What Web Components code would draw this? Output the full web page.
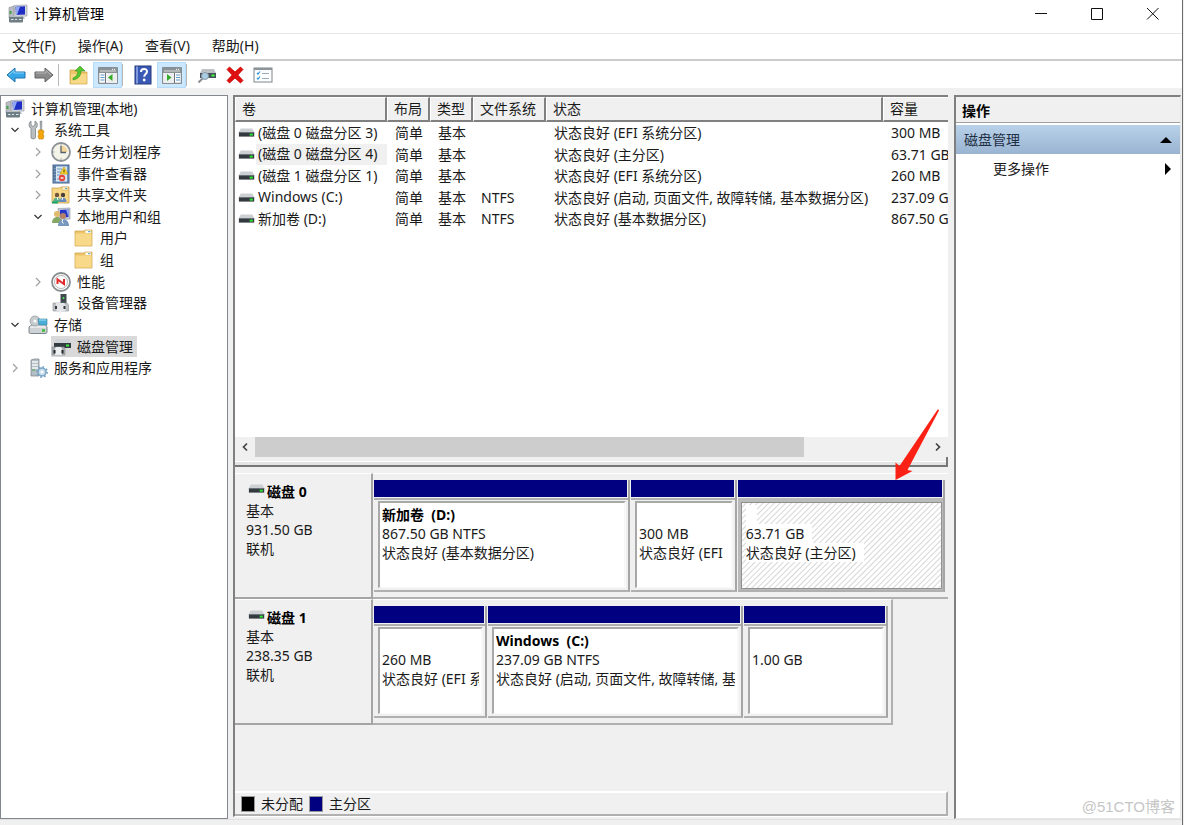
<!DOCTYPE html>
<html lang="zh-CN">
<head>
<meta charset="utf-8">
<title>计算机管理</title>
<style>
html, body { margin: 0; min-height: 100%; background: #f0f0f0; }
body { font: 14px/20px "Noto Sans", "Noto Sans CJK SC", sans-serif; color: #1a1a1a; }
</style>
</head>
<body>
<mmc-window></mmc-window>
<script>
const ICONS = {
  computer: `<path d="M1 3.500L6 2v12H1z" fill="#b9bdc2" stroke="#8d9299" stroke-width=".6"/><path d="M6 1.500L19 1v11L7 12.500z" fill="#d5d8dd" stroke="#9a9fa8" stroke-width=".7"/><path d="M7.500 2.800L17 2.300v8.200L8 11z" fill="#1f2fc4"/><path d="M8 2.800h4L9 11H8z" fill="#8ea6f4"/><path d="M12 13h4l1 2h-6z" fill="#b9bcc2"/><rect x="1" y="12" width="14" height="6.500" rx="1" fill="#6f7d84"/><path d="M1.500 12.500h13" stroke="#b4bec3"/><path d="M3 15.500h2.500M7 15.500h2M11 15.500h2.500" stroke="#dfe6e8" stroke-width="1.200"/><path d="M2.500 7v3" stroke="#41a14a" stroke-width="2"/>`,
  back: `<path d="M1 10l8-7v4h10v6H9v4z" fill="#35a7e8" stroke="#2173aa" stroke-linejoin="round"/><path d="M3 10l5-4.500V8h10" fill="none" stroke="#8dd4fa"/>`,
  forward: `<path d="M19 10l-8-7v4H1v6h10v4z" fill="#8b8b8b" stroke="#626262" stroke-linejoin="round"/><path d="M2 8h10V5.500l5 4.500" fill="none" stroke="#b9b9b9"/>`,
  upfolder: `<path d="M1 5h6l1 2h10v12H1z" fill="#eec568" stroke="#caa048" stroke-width=".7"/><path d="M2 9h15.500v9.500H2z" fill="#f8d98a"/><path d="M4 13c3-1 5-4 5-7H6l5-5 5 5h-4c0 5-3 8-8 9z" fill="#55c62e" stroke="#329019" stroke-width=".6"/>`,
  paneleft: `<rect x=".7" y="2.700" width="18.600" height="15.600" fill="#fafafa" stroke="#71777b"/><path d="M1 3h18v5H1z" fill="#8b9296"/><path d="M2 6h16" stroke="#d9dcde"/><path d="M14 4.300h1M16 4.300h1" stroke="#fff"/><path d="M7.500 8v10" stroke="#6b7074"/><path d="M2.500 10h4M2.500 12.500h4M2.500 15h4" stroke="#5c9ac8" stroke-width="1.200"/><path d="M9 8h10v10H9z" fill="#eceeef"/><path d="M14.500 9v7L10 12.500z" fill="#34a927"/>`,
  help: `<rect x="2" y="1" width="16" height="18" fill="#3a58b5" stroke="#24387f"/><path d="M3 1.500h2v17H3z" fill="#7f98dc"/><path d="M8 7c0-4 6-4 6-.5 0 2.500-2.800 2.500-2.800 5.200" fill="none" stroke="#fff" stroke-width="2"/><circle cx="11.200" cy="15" r="1.400" fill="#fff"/>`,
  paneright: `<rect x=".7" y="2.700" width="18.600" height="15.600" fill="#fafafa" stroke="#71777b"/><path d="M1 3h18v5H1z" fill="#8b9296"/><path d="M2 6h16" stroke="#d9dcde"/><path d="M14 4.300h1M16 4.300h1" stroke="#fff"/><path d="M1.500 8h10.500v10H1.500z" fill="#eceeef"/><path d="M12.500 8v10" stroke="#6b7074"/><path d="M14 10h4M14 12.500h4M14 15h4" stroke="#5c9ac8" stroke-width="1.200"/><path d="M5 9v7l4.500-3.500z" fill="#34a927"/>`,
  diskfind: `<path d="M5 4h12l2 4v1H3V8z" fill="#bcc1c5"/><path d="M3 8h16v5H3z" fill="#46525a"/><path d="M14.500 10.500h3" stroke="#3dff3d" stroke-width="2"/><circle cx="8" cy="11" r="3.500" fill="#a9cee6" stroke="#8d9ba5"/><path d="M5.500 13.500L1.500 17.500" stroke="#858c93" stroke-width="2"/>`,
  remove: `<path d="M2 4.500L4.500 2 10 7l5.500-5L18 4.500 12.800 10l5.200 5.500-2.500 2.500L10 13l-5.500 5L2 15.500 7.200 10z" fill="#df1010" stroke="#c00" stroke-width=".8"/>`,
  checklist: `<rect x="1" y="3" width="18" height="14" fill="#fbfdff" stroke="#7e868b"/><path d="M1 4h18" stroke="#8a9499" stroke-width="2"/><path d="M4 8l1 1 2-2.500M4 13l1 1 2-2.500" fill="none" stroke="#358fd3" stroke-width="1.200"/><path d="M9 8.500h7M9 13.500h7" stroke="#9cadb7"/>`,
  tools: `<path d="M3 1v4l2 1.500L7 5V1c3 1.500 3 6 .5 7.500V18q-2.500 2-4.500 0V8.500C.5 7 .5 2.500 3 1z" fill="#b9bec0" stroke="#7e8486" stroke-width=".8"/><path d="M12 1h2l-.3 9h-1.400z" fill="#9ba2a6" stroke="#7e8486" stroke-width=".4"/><path d="M11 10h4l1 2-1 2 1 2-1 3h-4l-1-3 1-2-1-2z" fill="#f4a80d" stroke="#c1790a" stroke-width=".6"/>`,
  clock: `<circle cx="10" cy="10" r="9" fill="#f4f3e8" stroke="#8c9197" stroke-width="1.800"/><path d="M10 10V3.500a6.500 6.500 0 0 1 6.500 6.500z" fill="#f4d69a"/><path d="M10 4v6.500h5" fill="none" stroke="#56616b" stroke-width="1.300"/><path d="M10 2.500v1M10 16.500v1M2.500 10h1" stroke="#777"/>`,
  events: `<rect x="2" y="1" width="16" height="18" fill="#7296c0" stroke="#45658f"/><path d="M5 2.500h11v15H5z" fill="#d7e6f3"/><path d="M6 5h5M6 8h4M6 11h3M6 15h2" stroke="#6c94bd"/><path d="M2 3h3M2 6h3M2 9h3M2 12h3M2 15h3" stroke="#465e7c"/><path d="M13 3l4 7H9z" fill="#ffd530" stroke="#b99300" stroke-width=".6"/><path d="M13 5.500v3" stroke="#473a00"/><circle cx="11" cy="14" r="3.200" fill="#e5443a"/><path d="M9.500 14h3" stroke="#fff" stroke-width="1.300"/>`,
  shared: `<path d="M1 3h8l1-1h8v16H1z" fill="#f7d684" stroke="#cba14c" stroke-width=".8"/><path d="M11 2h6v3h-6z" fill="#fff3c8" stroke="#bc9d60" stroke-width=".5"/><path d="M14 3.500h2" stroke="#4f9ac7"/><circle cx="6" cy="10" r="2.200" fill="#70553f"/><path d="M2 17c0-6 8-6 8 0z" fill="#58ae8c"/><circle cx="12" cy="10" r="2.200" fill="#4b4039"/><path d="M8.500 17c0-6 7-6 7 0z" fill="#6889bd"/><path d="M6 12l1 3M12 12l-1 3" stroke="#fff"/><path d="M1 17.500h6" stroke="#1ba86b" stroke-width="2"/>`,
  users: `<path d="M7 1.500l12-.5v11l-11 .5z" fill="#c4cad8" stroke="#8a91a0" stroke-width=".6"/><path d="M9 3l8.500-.5V10L9 10.500z" fill="#2537c6"/><path d="M15 2.500h2.500V10z" fill="#91a7f4"/><circle cx="6" cy="7" r="3" fill="#e2b96d"/><path d="M1 16c0-8 10-8 10 0z" fill="#85a964"/><circle cx="12" cy="9" r="3" fill="#b58267"/><path d="M7 19c0-9 11-9 11 0z" fill="#7898bd"/><path d="M12 12l-1 3 1.500 1.500" stroke="#fff" fill="none"/>`,
  folder: `<path d="M1 3h9l1-1h7v16H1z" fill="#edc469" stroke="#cba14c" stroke-width=".7"/><path d="M1.500 5.500h16v12h-16z" fill="#f8d98a"/><path d="M11.500 2.500h5.500v2.500h-5.500z" fill="#fff"/><path d="M14 3.700h2.500" stroke="#4f9ac7"/>`,
  performance: `<circle cx="10" cy="10" r="9" fill="#fff" stroke="#888d90" stroke-width="1.800"/><circle cx="10" cy="10" r="6.500" fill="none" stroke="#b5b5b5"/><path d="M6.500 12V7.500L13 12V7" fill="none" stroke="#e32a2a" stroke-width="2"/>`,
  device: `<path d="M9.500 1h6v10h-6z" fill="#3f494f"/><path d="M12.500 4v2" stroke="#51e451" stroke-width="1.500"/><path d="M2 10h7v8H2zM10 10h6l1.500 2v6H10z" fill="#bfc3c7" stroke="#8a9196" stroke-width=".6"/><path d="M5 10h8l1.500 2v6h-9z" fill="#e3e5e7"/><path d="M4 13h2v3H4zM12.500 13h2v3h-2z" fill="#333b40"/>`,
  storage: `<path d="M1 12l4-3h12l2 3v5q0 1.500-2 1.500H2.500Q1 18.500 1 17z" fill="#ced2d5" stroke="#707a82" stroke-width=".9"/><path d="M2 12h16" stroke="#fff"/><path d="M14 15.500h3" stroke="#35bd35" stroke-width="2.500"/><circle cx="7" cy="6" r="5" fill="#c6cbcd" stroke="#8f979a" stroke-width=".7"/><circle cx="7" cy="6" r="1.500" fill="#fff"/><path d="M10 4h9v6h-8z" fill="#49afd8" stroke="#397c9b" stroke-width=".6"/><path d="M11 5h7" stroke="#a9e2f5"/>`,
  diskmgmt: `<path d="M5 2h13l2 4v1H3V6z" fill="#cfd3d6"/><path d="M3 6h17v5H3z" fill="#333c41"/><path d="M15 8.500h3" stroke="#3fea43" stroke-width="2"/><path d="M1 10h12l1 2v6H1z" fill="#a8adb2" stroke="#858a8f" stroke-width=".6"/><path d="M5 10h5l1 2v6H4v-6z" fill="#edeff0"/><path d="M2.500 13h2v3.500h-2zM10.500 13h2v3.500h-2z" fill="#222"/>`,
  services: `<path d="M3 2l3-1h5v17H3z" fill="#b5bec4" stroke="#77838b" stroke-width=".7"/><path d="M4 4h6M4 7h6M4 10h6" stroke="#f4f7f8" stroke-width="1.500"/><path d="M4 12h3" stroke="#41a54a"/><circle cx="14" cy="14" r="4" fill="#c4dbea" stroke="#7ba5c4" stroke-width="1.500"/><circle cx="14" cy="14" r="5" fill="none" stroke="#7ba5c4" stroke-width="2" stroke-dasharray="1.600 2.300"/><circle cx="14" cy="14" r="1.500" fill="#fff"/>`,
  drive: `<path d="M3 5h13l2 4H1z" fill="#cdd0d3"/><path d="M1 9h17v5H1z" fill="#333a3f"/><path d="M1 9.500h17" stroke="#70787e"/><path d="M13 11.800h3.500" stroke="#28e830" stroke-width="2.200"/>`
};

class Base extends HTMLElement {
  render(css, html) {
    const t = document.createElement("template");
    t.innerHTML = `<style>*{box-sizing:border-box}button{font:inherit;color:inherit;border:0;background:none;padding:0;margin:0}:host{box-sizing:border-box}${css}</style>${html}`;
    (this.shadowRoot || this.attachShadow({ mode: "open" })).replaceChildren(t.content.cloneNode(true));
  }
}
const define = (name, css, html) => customElements.define(name, class extends Base {
  connectedCallback() { this.render(css, typeof html === "function" ? html(this) : html); }
});

define("mmc-icon", `:host{display:block;flex:none;width:20px;height:20px}svg{display:block;width:100%;height:100%}`,
  el => `<svg viewBox="0 0 20 20" aria-hidden="true">${ICONS[el.getAttribute("name")]}</svg>`);

define("title-bar", `
  :host{display:flex;align-items:center;height:33px;padding:0 2px 6px 8px;background:#fff;gap:6px;color:#000}
  span{flex:1}
  div{display:flex}
  button{width:56px;height:27px;display:grid;place-items:center}
  svg{width:13px;height:13px;fill:none;stroke:#111}`,
  `<mmc-icon name="computer"></mmc-icon><span><slot></slot></span>
  <div><button aria-label="最小化"><svg><path d="M1 6.500h12"/></svg></button>
  <button aria-label="最大化"><svg><path d="M1.500 1.500h11v11h-11z"/></svg></button>
  <button aria-label="关闭"><svg><path d="M1 1l11.500 11.500M12.500 1L1 12.500"/></svg></button></div>`);

define("menu-bar", `
  :host{display:flex;align-items:flex-start;gap:22px;height:28px;padding:2px 12px 0;border-top:1px solid #e8e8e8;border-bottom:2px solid #cbcbcb;background:#fff}`,
  `<button>文件(F)</button><button>操作(A)</button><button>查看(V)</button><button>帮助(H)</button>`);

define("tool-bar", `
  :host{display:flex;align-items:center;height:27px;padding:0 2px;background:#fff}
  button{width:28px;height:26px;display:grid;place-items:center}
  button[aria-pressed]{background:#cce8ff;border:1px solid #b5dcfb;width:29px}
  i{width:1px;height:22px;background:#b8b8b8;margin-right:6px}`,
  `<button aria-label="后退"><mmc-icon name="back"></mmc-icon></button>
  <button aria-label="前进"><mmc-icon name="forward"></mmc-icon></button>
  <i></i>
  <button aria-label="上移一级"><mmc-icon name="upfolder"></mmc-icon></button>
  <button aria-label="显示控制台树" aria-pressed="true"><mmc-icon name="paneleft"></mmc-icon></button>
  <i></i>
  <button aria-label="帮助"><mmc-icon name="help"></mmc-icon></button>
  <button aria-label="显示操作窗格" aria-pressed="true"><mmc-icon name="paneright"></mmc-icon></button>
  <i></i>
  <button aria-label="重新扫描"><mmc-icon name="diskfind"></mmc-icon></button>
  <button aria-label="删除"><mmc-icon name="remove"></mmc-icon></button>
  <button aria-label="属性"><mmc-icon name="checklist"></mmc-icon></button>`);

define("tree-item", `
  :host{display:flex;align-items:center;gap:6px;padding-left:calc(var(--depth)*23px - 16px);white-space:nowrap}
  :host([level="0"]){--depth:0;padding-left:4px}:host([level="1"]){--depth:1}:host([level="2"]){--depth:2}:host([level="3"]){--depth:3}
  :host([level="0"]) .chev{display:none}
  .chev{width:14px;height:14px;flex:none;display:grid;place-items:center}
  svg{width:10px;height:10px;fill:none;stroke:#a0a0a0;stroke-width:1.200}
  .open svg{stroke:#333}
  .label{display:flex;align-items:center;gap:6px;height:100%;padding-right:4px}
  :host([selected]) .label{background:#d9d9d9}`,
  el => {
    const s = el.getAttribute("state");
    const chev = s ? `<button class="chev ${s}" aria-label="展开或折叠"><svg><path d="${s === "open" ? "M1.500 3L5 6.500 8.500 3" : "M3 1l4 4-4 4"}"/></svg></button>` : `<span class="chev"></span>`;
    return `${chev}<span class="label"><mmc-icon name="${el.getAttribute("icon")}"></mmc-icon><slot></slot></span>`;
  });

define("console-tree", `
  :host{display:block;background:#fff;border:1px solid #828790;padding-top:2px}
  div{display:grid;grid-auto-rows:1fr;height:281px}`,
  `<div role="tree">
  <tree-item level="0" icon="computer">计算机管理(本地)</tree-item>
  <tree-item level="1" state="open" icon="tools">系统工具</tree-item>
  <tree-item level="2" state="shut" icon="clock">任务计划程序</tree-item>
  <tree-item level="2" state="shut" icon="events">事件查看器</tree-item>
  <tree-item level="2" state="shut" icon="shared">共享文件夹</tree-item>
  <tree-item level="2" state="open" icon="users">本地用户和组</tree-item>
  <tree-item level="3" icon="folder">用户</tree-item>
  <tree-item level="3" icon="folder">组</tree-item>
  <tree-item level="2" state="shut" icon="performance">性能</tree-item>
  <tree-item level="2" icon="device">设备管理器</tree-item>
  <tree-item level="1" state="open" icon="storage">存储</tree-item>
  <tree-item level="2" icon="diskmgmt" selected>磁盘管理</tree-item>
  <tree-item level="1" state="shut" icon="services">服务和应用程序</tree-item>
  </div>`);

const VOLUMES = [
  ["(磁盘 0 磁盘分区 3)", "", "状态良好 (EFI 系统分区)", "300 MB"],
  ["(磁盘 0 磁盘分区 4)", "", "状态良好 (主分区)", "63.71 GB"],
  ["(磁盘 1 磁盘分区 1)", "", "状态良好 (EFI 系统分区)", "260 MB"],
  ["Windows (C:)", "NTFS", "状态良好 (启动, 页面文件, 故障转储, 基本数据分区)", "237.09 GB"],
  ["新加卷 (D:)", "NTFS", "状态良好 (基本数据分区)", "867.50 GB"]
];
define("volume-list", `
  :host{display:flex;flex-direction:column;justify-content:space-between;height:360px;background:#fff;overflow:hidden}
  .view{overflow:hidden}
  table{border-collapse:separate;border-spacing:0;table-layout:fixed;width:810px;white-space:nowrap}
  th{height:25px;padding:0 0 0 6px;text-align:left;font-weight:400;background:#f0f0f0;border:solid;border-width:1px 2px 2px 1px;border-color:#fff #808080 #808080 #fff}
  td{height:22px;padding:0 0 0 8px;overflow:hidden}
  tr:nth-child(even) td{height:21px}
  td:first-child{padding-left:3px}
  td>span{display:flex;align-items:center}
  mmc-icon{width:18px;height:18px}
  em{font-style:normal;padding:0 2px;height:21px}
  tr:nth-child(2) em{background:#f0f0f0;flex:1}
  .bar{display:flex;height:20px;background:#f0f0f0}
  .bar button{width:20px;display:grid;place-items:center;flex:none}
  .track{flex:1;padding-right:124px}.thumb{height:100%;background:#cdcdcd}
  svg{width:8px;height:10px;fill:none;stroke:#444;stroke-width:1.700}`,
  () => `<div class="view"><table><colgroup><col style="width:152px"><col style="width:43px"><col style="width:43px"><col style="width:73px"><col style="width:337px"><col></colgroup>
  <thead><tr><th>卷</th><th>布局</th><th>类型</th><th>文件系统</th><th>状态</th><th>容量</th></tr></thead>
  <tbody>${VOLUMES.map(v => `<tr><td><span><mmc-icon name="drive"></mmc-icon><em>${v[0]}</em></span></td><td>简单</td><td>基本</td><td>${v[1]}</td><td>${v[2]}</td><td>${v[3]}</td></tr>`).join("")}</tbody></table></div>
  <div class="bar"><button aria-label="向左滚动"><svg><path d="M6 1.500L2.500 5 6 8.500"/></svg></button><div class="track"><div class="thumb"></div></div><button aria-label="向右滚动"><svg><path d="M2 1.500L5.500 5 2 8.500"/></svg></button></div>`);

define("disk-partition", `
  :host{display:flex;flex-direction:column;min-width:0;border-right:2px solid #a5a5a5;border-bottom:2px solid #b0b0b0;height:112px}
  .cap{height:17px;background:#000080;margin-right:1px;flex:none}
  .frame{flex:1;border-top:2px solid #b0b0b0;padding:1px 2px 2px 4px;margin-top:1px;min-height:0}
  .body{height:100%;background:#fff;border:solid;border-width:2px 2px 1px 2px;border-color:#a8a8a8 #f8f8f8 #f8f8f8 #a8a8a8;padding:2px 2px 0 2px;overflow:hidden;line-height:19px}
  .body>*{display:block;width:max-content;max-width:100%;overflow:hidden;white-space:pre;height:19px}
  b{color:#000}
  :host([selected]) .frame{background:#bababa;border-color:#bababa;padding:2px 1px 1px 3px}
  :host([selected]) .body{border:1px solid #909090;padding:2px 2px 0 4px;background:repeating-linear-gradient(135deg,#fff 0 2px,#d6d6d6 3px,#fff 4px)}
  :host([selected]) .body>*{background:#fff;padding-right:8px}`,
  el => `<div class="cap"></div><div class="frame"><div class="body"><b>${el.getAttribute("label") || ""}</b><span>${el.getAttribute("size")}</span><span><slot></slot></span></div></div>`);

define("disk-row", `
  :host{display:flex;height:126px}
  .info{width:138px;flex:none;padding:8px 0 0 11px;line-height:19px;border-top:1px solid #fff;border-right:2px solid #a5a5a5;border-bottom:2px solid #a5a5a5}
  .name{display:flex;font-weight:700;color:#000}
  mmc-icon{width:18px;height:18px;margin:-2px 1px 0 2px}
  .parts{display:grid;gap:1px;padding:6px 3px 3px 1px;border-top:1px solid #fff;border-bottom:2px solid #b0b0b0;flex:1;min-width:0}
  :host([short]) .parts{flex:0 1 520px;border-right:2px solid #b0b0b0}`,
  el => `<div class="info"><div class="name"><mmc-icon name="drive"></mmc-icon>${el.getAttribute("name")}</div><div>基本</div><div>${el.getAttribute("size")}</div><div>联机</div></div>
  <div class="parts" style="grid-template-columns:${el.getAttribute("cols")}"><slot></slot></div>`);

define("disk-map", `
  :host{display:flex;flex-direction:column;flex:1;background:#f0f0f0;padding-top:6px;min-height:0}
  .legend{display:flex;align-items:center;margin-top:auto;height:25px;padding:0 6px;border:solid;border-width:2px 2px 2px 0;border-color:#fff #b0b0b0 #b0b0b0;gap:6px}
  i{width:14px;height:16px;border:1px solid #999}`,
  `<disk-row name="磁盘 0" size="931.50 GB" cols="257fr 106fr 208fr">
    <disk-partition label="新加卷  (D:)" size="867.50 GB NTFS">状态良好 (基本数据分区)</disk-partition>
    <disk-partition size="300 MB">状态良好 (EFI</disk-partition>
    <disk-partition size="63.71 GB" label=" " selected>状态良好 (主分区)</disk-partition></disk-row>
  <disk-row name="磁盘 1" size="238.35 GB" cols="113fr 255fr 144fr" short>
    <disk-partition size="260 MB">状态良好 (EFI 系统分区)</disk-partition>
    <disk-partition label="Windows  (C:)" size="237.09 GB NTFS">状态良好 (启动, 页面文件, 故障转储, 基本数据分区)</disk-partition>
    <disk-partition size="1.00 GB"></disk-partition></disk-row>
  <div class="legend"><i style="background:#000"></i><span>未分配</span><i style="background:#000080"></i><span>主分区</span></div>`);

define("action-pane", `
  :host{display:flex;flex-direction:column;background:#fff;border:solid;border-width:2px 1px 1px 2px;border-color:#808080 #e8e8e8 #e8e8e8 #808080}
  h2{margin:0 0 2px;height:26px;padding:4px 6px 0;font-size:14px;line-height:20px;color:#000;background:#f0f0f0;border-bottom:1px solid #a0a0a0}
  button{display:flex;align-items:center;justify-content:space-between;text-align:left}
  .section{height:29px;padding:0 8px;background:linear-gradient(#b9d1ea,#99b4d1);color:#1e2f45}
  .more{height:29px;padding:0 8px 0 37px}
  svg{width:12px;height:12px;fill:#000}`,
  `<h2>操作</h2><button class="section">磁盘管理<svg><path d="M0 9l6-6 6 6z"/></svg></button>
  <button class="more">更多操作<svg><path d="M5 0l6 6-6 6z"/></svg></button>`);

define("mmc-window", `
  :host{display:flex;flex-direction:column;min-height:100vh;position:relative;border-right:1px solid #6c6c6c;margin-right:1px;background:#f0f0f0}
  main{flex:1;display:grid;grid-template-columns:228px minmax(0,1fr) 227px;padding:7px 1px 0 0;column-gap:5px}
  .center{display:flex;flex-direction:column;position:relative;border-top:2px solid #808080;border-left:2px solid #808080;border-bottom:1px solid #fff;margin:0 1px 2px 0;min-width:0}
  .split{height:10px;border:solid;border-width:0 2px 2px 0;border-color:#777;background:linear-gradient(#f0f0f0 4px,#fff 4px 5px,#e4e4e4 5px)}
  .arrow{position:absolute;right:7px;top:312px;width:46px;height:73px;fill:#fb2215}
  footer{height:6px;background:#f0f0f0;border-top:1px solid #e0e0e0}
  .mark{position:absolute;right:7px;bottom:8px;font-size:15px;color:#c6c6c6;font-family:"Liberation Sans","Noto Sans CJK SC",sans-serif}`,
  `<title-bar>计算机管理</title-bar><menu-bar></menu-bar><tool-bar></tool-bar>
  <main><console-tree></console-tree>
  <div class="center"><volume-list></volume-list><div class="split"></div><disk-map></disk-map>
  <svg class="arrow" aria-hidden="true"><path d="M43 0l1 1.500-31.500 59.500 5 1L.5 71V53.500L4.500 57z"/></svg></div>
  <action-pane></action-pane></main><footer></footer><span class="mark">@51CTO博客</span>`);
</script>
</body>
</html>
